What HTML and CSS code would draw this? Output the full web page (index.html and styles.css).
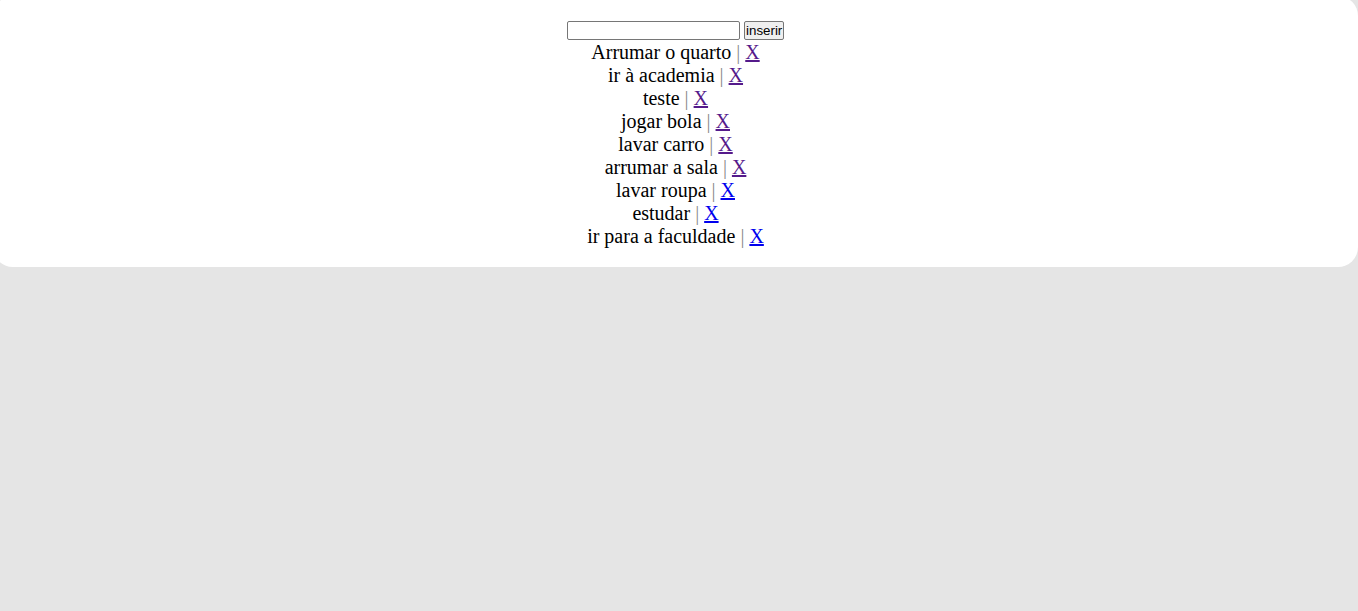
FILE: index.html
```html
<!DOCTYPE html>
<html lang="pt">
<head>
<meta charset="utf-8">
<title>Tarefas</title>
<link rel="stylesheet" href="styles.css">
</head>
<body>
<div class="card">
  <form class="entry">
    <input class="entry-input" type="text"> <button class="entry-btn" type="button">inserir</button>
  </form>
  <div class="list">
    <div class="item">Arrumar o quarto <span class="sep">|</span> <a class="del visited" href="#">X</a></div>
    <div class="item">ir à academia <span class="sep">|</span> <a class="del visited" href="#">X</a></div>
    <div class="item">teste <span class="sep">|</span> <a class="del visited" href="#">X</a></div>
    <div class="item">jogar bola <span class="sep">|</span> <a class="del visited" href="#">X</a></div>
    <div class="item">lavar carro <span class="sep">|</span> <a class="del visited" href="#">X</a></div>
    <div class="item">arrumar a sala <span class="sep">|</span> <a class="del visited" href="#">X</a></div>
    <div class="item">lavar roupa <span class="sep">|</span> <a class="del" href="#">X</a></div>
    <div class="item">estudar <span class="sep">|</span> <a class="del" href="#">X</a></div>
    <div class="item">ir para a faculdade <span class="sep">|</span> <a class="del" href="#">X</a></div>
  </div>
</div>
</body>
</html>
```
FILE: styles.css
```css
html, body {
  margin: 0;
  padding: 0;
  background: #e5e5e5;
  overflow: hidden;
}
body {
  font-family: "Liberation Serif", "Times New Roman", serif;
  font-size: 20px;
  color: #000;
}
.card {
  background: #fff;
  border-radius: 20px;
  margin: -4px 0 0 -7px;
  padding: 25px 0 19px 0;
  text-align: center;
}
.entry {
  margin: 0;
  height: 20px;
  line-height: 20px;
  font-size: 13.33px;
}
.entry-input {
  width: 167px;
  height: 15px;
  padding: 1px 2px;
  border: 1px solid #767676;
  border-radius: 2px;
  font-family: "Liberation Sans", Arial, sans-serif;
  font-size: 13.33px;
  vertical-align: top;
  margin: 0;
}
.entry-btn {
  height: 19px;
  padding: 0 1px;
  border: 1px solid #767676;
  border-radius: 2px;
  background: #efefef;
  font-family: "Liberation Sans", Arial, sans-serif;
  font-size: 13.33px;
  color: #000;
  vertical-align: top;
  margin: 0 0 0 1px;
  line-height: 15px;
}
.item {
  line-height: 23px;
}
.sep {
  color: #8a8a8a;
}
.del {
  color: #0000ee;
  text-decoration: underline;
}
.del.visited {
  color: #551a8b;
}
```
